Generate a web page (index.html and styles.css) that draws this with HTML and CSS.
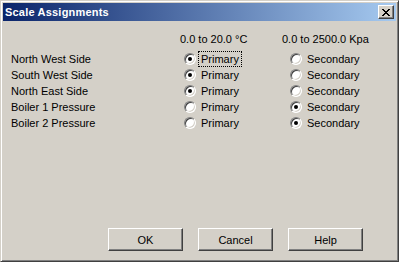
FILE: index.html
```html
<!DOCTYPE html>
<html lang="en">
<head>
  <meta charset="UTF-8" />
  <title>Scale Assignments</title>
  <link rel="stylesheet" href="styles.css">
</head>
<body>
  <div class="dialog">
    <div class="titlebar">
      <span class="title">Scale Assignments</span>
      <button class="close" aria-label="Close">
        <svg width="8" height="7" viewBox="0 0 8 7">
          <path d="M0 0h2v1h-2zM6 0h2v1h-2zM1 1h2v1h-2zM5 1h2v1h-2zM2 2h4v1h-4zM3 3h2v1h-2zM2 4h4v1h-4zM1 5h2v1h-2zM5 5h2v1h-2zM0 6h2v1h-2zM6 6h2v1h-2z" fill="#000"/>
        </svg>
      </button>
    </div>

    <div class="content">
      <div class="scales">
        <span class="scale">0.0 to 20.0 °C</span>
        <span class="scale">0.0 to 2500.0 Kpa</span>
      </div>

      <div class="rows">
        <span class="name">North West Side</span>
        <span class="option"><i class="radio on"></i><span class="text focus">Primary</span></span>
        <span class="option"><i class="radio"></i><span class="text">Secondary</span></span>

        <span class="name">South West Side</span>
        <span class="option"><i class="radio on"></i><span class="text">Primary</span></span>
        <span class="option"><i class="radio"></i><span class="text">Secondary</span></span>

        <span class="name">North East Side</span>
        <span class="option"><i class="radio on"></i><span class="text">Primary</span></span>
        <span class="option"><i class="radio"></i><span class="text">Secondary</span></span>

        <span class="name">Boiler 1 Pressure</span>
        <span class="option"><i class="radio"></i><span class="text">Primary</span></span>
        <span class="option"><i class="radio on"></i><span class="text">Secondary</span></span>

        <span class="name">Boiler 2 Pressure</span>
        <span class="option"><i class="radio"></i><span class="text">Primary</span></span>
        <span class="option"><i class="radio on"></i><span class="text">Secondary</span></span>
      </div>

      <div class="buttons">
        <button class="btn">OK</button>
        <button class="btn">Cancel</button>
        <button class="btn">Help</button>
      </div>
    </div>
  </div>
</body>
</html>
```

FILE: styles.css
```css
body { margin: 0; font-family: "Liberation Sans", Arial, sans-serif; font-size: 11px; color: #000; }

.dialog {
  width: 399px; height: 262px; box-sizing: border-box;
  background: #d4d0c8; padding: 2px;
  border: 1px solid; border-color: #d4d0c8 #404040 #404040 #d4d0c8;
  box-shadow: inset 1px 1px #fff, inset -1px -1px #808080;
  display: flex; flex-direction: column;
}

.titlebar {
  height: 18px; display: flex; align-items: center; justify-content: space-between;
  padding: 0 2px 0 2px;
  background: linear-gradient(to right, #0a246a, #a6caf0);
}
.title { color: #fff; font-weight: bold; font-size: 11px; letter-spacing: 0.2px; }

.close {
  width: 16px; height: 14px; padding: 0; margin: 0;
  display: flex; align-items: center; justify-content: center;
  background: #d4d0c8; border: 1px solid; border-color: #fff #404040 #404040 #fff;
  box-shadow: inset -1px -1px #808080;
}

.content { flex: 1; display: flex; flex-direction: column; padding: 10px 0 8px 8px; }

.scales { display: flex; padding-left: 169px; line-height: 16px; }
.scale:first-child { width: 102px; }

.rows {
  display: grid; grid-template-columns: 173px 106px auto;
  grid-auto-rows: 16px; margin-top: 4px; align-items: center;
}

.option { display: flex; align-items: center; }
.text { border: 1px dotted transparent; padding: 0 2px; margin-left: 2px; line-height: 14px; }
.text.focus { border-color: #000; }

.radio {
  width: 12px; height: 12px; box-sizing: border-box; border-radius: 50%;
  background: #fff; position: relative;
  border: 1px solid; border-color: #808080 #fff #fff #808080;
  box-shadow: inset 1px 1px #404040, inset -1px -1px #d4d0c8;
}
.radio.on::after {
  content: ""; position: absolute; left: 3px; top: 3px;
  width: 4px; height: 4px; border-radius: 50%; background: #000;
}

.buttons { margin-top: auto; display: flex; justify-content: flex-end; gap: 15px; padding-right: 33px; }
.btn {
  width: 75px; height: 23px; padding: 0;
  font-family: "Liberation Sans", Arial, sans-serif; font-size: 11px; color: #000;
  background: #d4d0c8; border: 1px solid; border-color: #fff #404040 #404040 #fff;
  box-shadow: inset -1px -1px #808080;
}
```
